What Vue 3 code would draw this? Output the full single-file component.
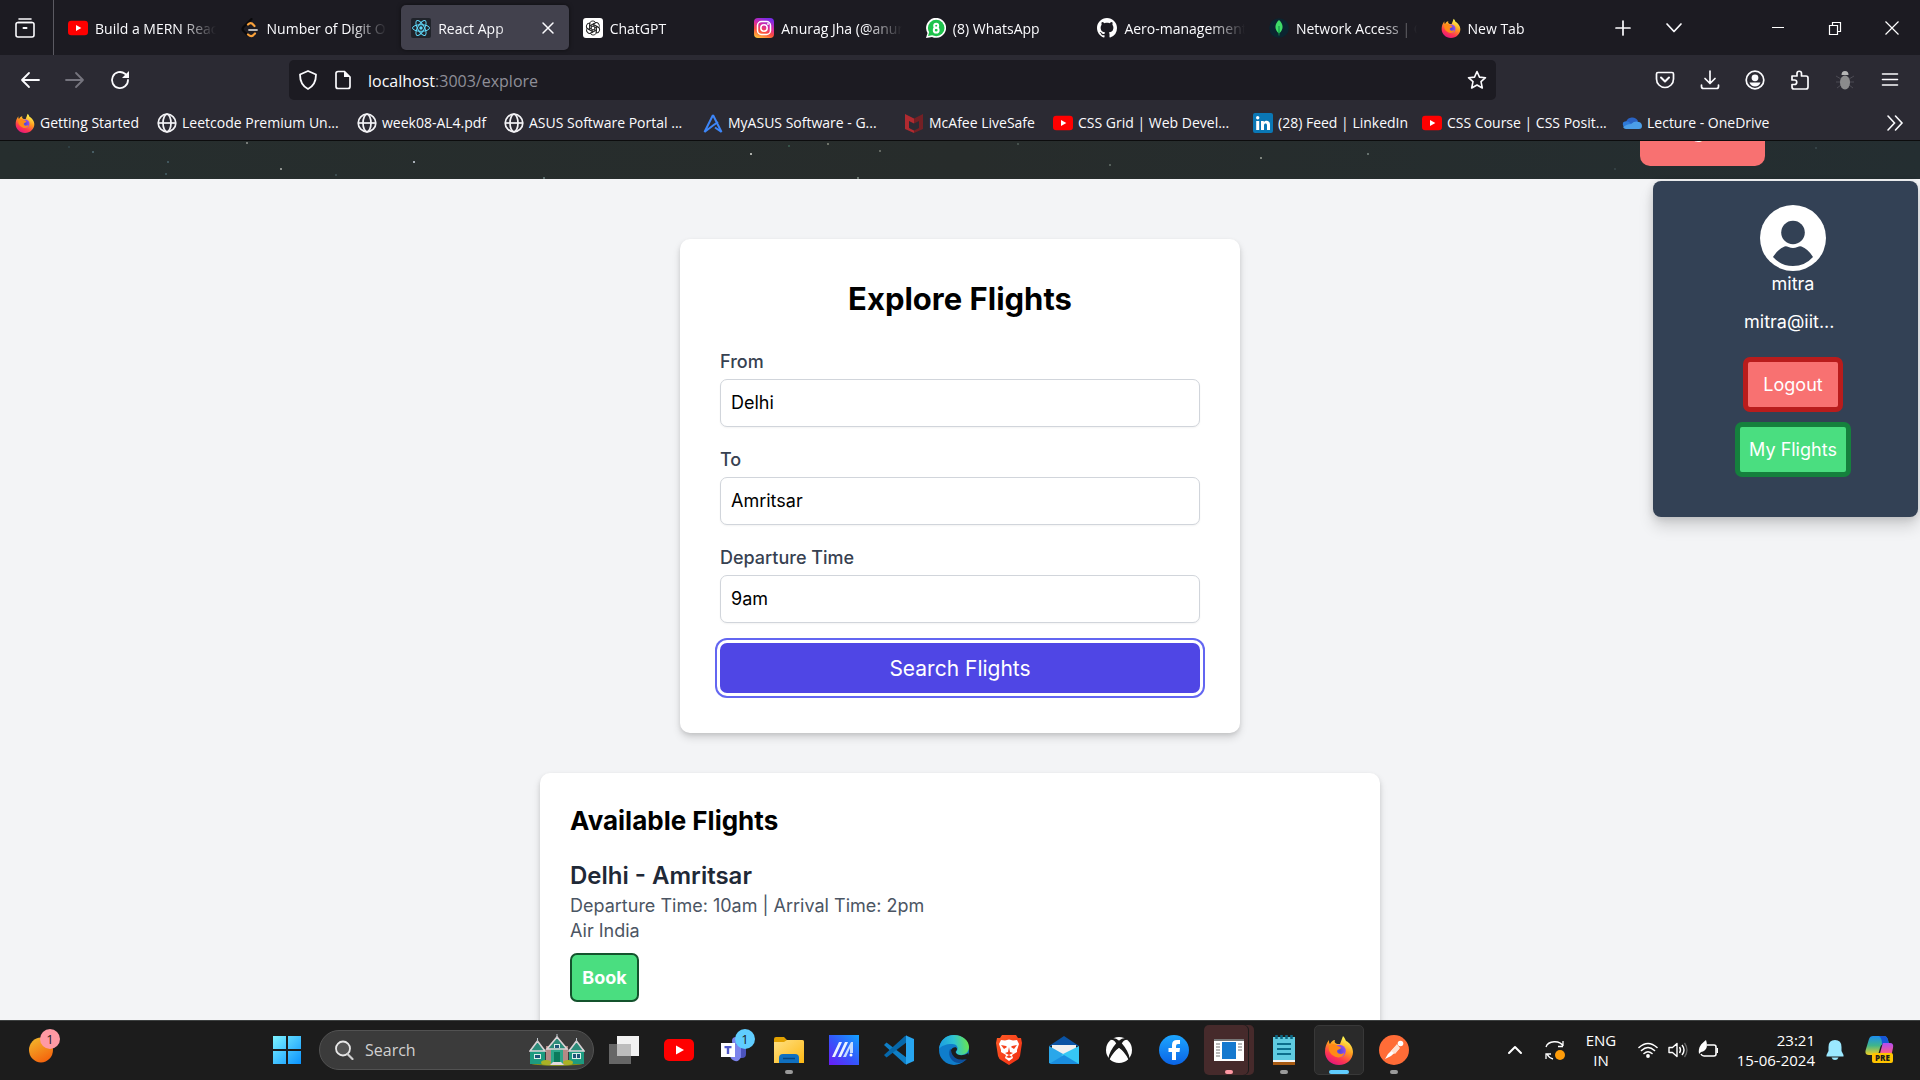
<script setup>
import { ref } from 'vue'

const from = ref('Delhi')
const to = ref('Amritsar')
const departure = ref('9am')
const address = ref('/explore')

const tabs = [
  { icon: 'youtube', label: 'Build a MERN React' },
  { icon: 'leetcode', label: 'Number of Digit One' },
  { icon: 'react', label: 'React App', active: true },
  { icon: 'chatgpt', label: 'ChatGPT' },
  { icon: 'instagram', label: 'Anurag Jha (@anurag' },
  { icon: 'whatsapp', label: '(8) WhatsApp' },
  { icon: 'github', label: 'Aero-management' },
  { icon: 'mongo', label: 'Network Access | Cloud' },
  { icon: 'firefox', label: 'New Tab' }
]

const bookmarks = [
  { icon: 'firefox', label: 'Getting Started' },
  { icon: 'globe', label: 'Leetcode Premium Un...' },
  { icon: 'globe', label: 'week08-AL4.pdf' },
  { icon: 'globe', label: 'ASUS Software Portal ...' },
  { icon: 'asus', label: 'MyASUS Software - G...' },
  { icon: 'mcafee', label: 'McAfee LiveSafe' },
  { icon: 'youtube', label: 'CSS Grid | Web Devel...' },
  { icon: 'linkedin', label: '(28) Feed | LinkedIn' },
  { icon: 'youtube', label: 'CSS Course | CSS Posit...' },
  { icon: 'onedrive', label: 'Lecture - OneDrive' }
]

const tools = ['pocket', 'download', 'account', 'puzzle', 'bug', 'menu']

const apps = [
  { icon: 'taskview', name: 'Task view' },
  { icon: 'youtube', name: 'YouTube' },
  { icon: 'teams', name: 'Teams', badge: 1 },
  { icon: 'folder', name: 'File Explorer', state: 'open' },
  { icon: 'myasus', name: 'MyASUS' },
  { icon: 'vscode', name: 'VS Code' },
  { icon: 'edge', name: 'Edge' },
  { icon: 'brave', name: 'Brave' },
  { icon: 'mail', name: 'Mail' },
  { icon: 'xbox', name: 'Xbox' },
  { icon: 'facebook', name: 'Facebook' },
  { icon: 'window', name: 'Window', state: 'alert' },
  { icon: 'notepad', name: 'Notepad', state: 'open' },
  { icon: 'firefox', name: 'Firefox', state: 'focused' },
  { icon: 'postman', name: 'Postman', state: 'open' }
]

const stars = [
  [92, 10, '#55717c'], [167, 20, '#4d6872'], [246, 1, '#9a9d98'], [280, 27, '#b9bcb6'], [413, 20, '#dfe6f2'],
  [165, 32, '#47626a'], [543, 36, '#6f8583'], [335, 33, '#44575b'], [68, 5, '#34494e'], [827, 2, '#8e9285'],
  [879, 9, '#7c8178'], [750, 12, '#e6e8e2'], [857, 36, '#8c9a90'], [788, 4, '#3f6457'], [1260, 16, '#a4aaa0'],
  [1109, 23, '#6a7670'], [1017, 2, '#52605a'], [1367, 12, '#808d88'], [1815, 6, '#3c4b50'], [1614, 27, '#3a474b']
]
</script>

<template>
  <div class="screen">
    <svg class="sprite" width="0" height="0" aria-hidden="true">
      <defs>
        <linearGradient id="g-ff" x1="0.8" y1="0" x2="0.3" y2="1">
          <stop offset="0.1" stop-color="#fff44f" /><stop offset="0.45" stop-color="#ff9a1f" /><stop offset="0.75" stop-color="#ff3750" /><stop offset="1" stop-color="#e3157f" />
        </linearGradient>
        <radialGradient id="g-ffc"><stop offset="0" stop-color="#4a4bd8" /><stop offset="1" stop-color="#9a4df0" /></radialGradient>
        <linearGradient id="g-ig" x1="0.2" y1="1" x2="0.6" y2="0">
          <stop offset="0" stop-color="#ffc13b" /><stop offset="0.35" stop-color="#fb4c3e" /><stop offset="0.65" stop-color="#d62aa6" /><stop offset="1" stop-color="#7a2be8" />
        </linearGradient>
        <linearGradient id="g-win" x1="0" y1="0" x2="1" y2="1"><stop offset="0" stop-color="#7df3ff" /><stop offset="1" stop-color="#0a93ff" /></linearGradient>
        <linearGradient id="g-orange" x1="0.2" y1="0" x2="0.7" y2="1"><stop offset="0" stop-color="#f2b62b" /><stop offset="1" stop-color="#f5610c" /></linearGradient>
        <linearGradient id="g-asus" x1="0" y1="1" x2="1" y2="0"><stop offset="0" stop-color="#6a1cf5" /><stop offset="0.5" stop-color="#3357fb" /><stop offset="1" stop-color="#12a2ff" /></linearGradient>
        <linearGradient id="g-folder" x1="0" y1="0" x2="1" y2="1"><stop offset="0" stop-color="#ffe083" /><stop offset="1" stop-color="#fdb813" /></linearGradient>
        <linearGradient id="g-edge" x1="0" y1="0.4" x2="1" y2="0.3"><stop offset="0" stop-color="#1b9de2" /><stop offset="0.5" stop-color="#2fc3d2" /><stop offset="1" stop-color="#6be64a" /></linearGradient>
        <linearGradient id="g-brave" x1="0" y1="0" x2="1" y2="1"><stop offset="0" stop-color="#ff5a25" /><stop offset="1" stop-color="#f02d13" /></linearGradient>
        <linearGradient id="g-fb" x1="0" y1="0" x2="0" y2="1"><stop offset="0" stop-color="#1da6ff" /><stop offset="1" stop-color="#0a63e6" /></linearGradient>
        <linearGradient id="g-cpl" x1="0" y1="0" x2="0" y2="1"><stop offset="0" stop-color="#1c8ef0" /><stop offset="0.5" stop-color="#3fb58b" /><stop offset="1" stop-color="#f2d021" /></linearGradient>
        <linearGradient id="g-cpr" x1="0" y1="0" x2="0" y2="1"><stop offset="0" stop-color="#b04df5" /><stop offset="0.6" stop-color="#f0589a" /><stop offset="1" stop-color="#ff9a58" /></linearGradient>
      </defs>

      <symbol id="youtube" viewBox="0 0 30 30"><rect y="4" width="30" height="22" rx="5" fill="#f00" /><path d="M12 10.500v9l8-4.500z" fill="#fff" /></symbol>
      <symbol id="leetcode" viewBox="0 0 20 20"><g fill="none" stroke-width="2.200" stroke-linecap="round"><path d="M11.500 1 3.500 9q-2 2 0 4l4 4" stroke="#0a0a0c" /><path d="M8 6.500q2-2 4-1l2.500 2.500M8 16.500q3 2.500 5 1l2-2" stroke="#f9a13a" /><path d="M9 12h8" stroke="#b7b7b7" stroke-width="1.800" /></g></symbol>
      <symbol id="react" viewBox="0 0 20 20"><rect width="20" height="20" rx="2" fill="#20232a" /><g fill="none" stroke="#61dafb"><ellipse cx="10" cy="10" rx="8.500" ry="3.300" /><ellipse cx="10" cy="10" rx="8.500" ry="3.300" transform="rotate(60 10 10)" /><ellipse cx="10" cy="10" rx="8.500" ry="3.300" transform="rotate(120 10 10)" /></g><circle cx="10" cy="10" r="1.700" fill="#61dafb" /></symbol>
      <symbol id="chatgpt" viewBox="0 0 20 20"><rect width="20" height="20" rx="3" fill="#fff" /><g fill="none" stroke="#222" stroke-width="0.900"><g id="petal"><path d="M6.500 11.800V6.300c0-3.600 4.600-4.400 6.200-1.700M8.300 11.200V7.400l4.500-2.600" /></g><use href="#petal" transform="rotate(60 10 10)" /><use href="#petal" transform="rotate(120 10 10)" /><use href="#petal" transform="rotate(180 10 10)" /><use href="#petal" transform="rotate(240 10 10)" /><use href="#petal" transform="rotate(300 10 10)" /></g></symbol>
      <symbol id="instagram" viewBox="0 0 20 20"><rect width="20" height="20" rx="4" fill="url(#g-ig)" /><g fill="none" stroke="#fff" stroke-width="1.500"><rect x="3.500" y="3.500" width="13" height="13" rx="4" /><circle cx="10" cy="10" r="3.200" /></g><circle cx="14" cy="6" r="0.900" fill="#fff" /></symbol>
      <symbol id="whatsapp" viewBox="0 0 20 20"><path d="M0 20 1.500 15A10 10 0 1 1 6 19z" fill="#fff" /><circle cx="10.200" cy="10" r="8.300" fill="#1fc24c" /><path d="M2 18l1.500-5 4 4z" fill="#1fc24c" /><g fill="none" stroke="#fff" stroke-width="2"><circle cx="10.200" cy="7.800" r="2" /><circle cx="10.200" cy="12.200" r="2.400" /></g></symbol>
      <symbol id="github" viewBox="0 0 16 16"><path fill="#fff" d="M8 0C3.580 0 0 3.580 0 8c0 3.540 2.290 6.530 5.470 7.590.4.070.55-.17.55-.38 0-.19-.01-.82-.01-1.490-2.010.37-2.530-.49-2.690-.94-.09-.23-.48-.94-.82-1.130-.28-.15-.68-.52-.01-.53.63-.01 1.080.58 1.230.82.72 1.210 1.870.87 2.330.66.07-.52.28-.87.51-1.070-1.780-.2-3.640-.89-3.640-3.950 0-.87.31-1.590.82-2.150-.08-.2-.36-1.020.08-2.120 0 0 .67-.21 2.200.82.64-.18 1.320-.27 2-.27s1.360.09 2 .27c1.530-1.040 2.200-.82 2.200-.82.44 1.100.16 1.920.08 2.120.51.56.82 1.270.82 2.150 0 3.070-1.870 3.750-3.650 3.950.29.25.54.73.54 1.480 0 1.070-.01 1.930-.01 2.200 0 .21.15.46.55.38A8 8 0 0 0 16 8c0-4.420-3.580-8-8-8z" /></symbol>
      <symbol id="mongo" viewBox="0 0 20 20"><circle cx="10" cy="10" r="9.800" fill="#0b2530" /><path d="M10 2c4.500 4 5 9.500 0 13.500C5 11.500 5.500 6 10 2z" fill="#3fdc68" /><path d="M10 8v9.500" stroke="#0b8a45" /></symbol>
      <symbol id="firefox" viewBox="0 0 30 30"><path d="M19 1c2 2 2.500 4 3 5 3 1 7 6 7 11 0 7-6 13-14 13S1 24 1 17c0-5 1-8 4-12 0 2 0 3 1 4 1-2 3-4 5-4-1 2 0 3 2 4h3c1-3 2-5 3-8z" fill="url(#g-ff)" /><circle cx="15.500" cy="16" r="6.300" fill="url(#g-ffc)" /><path d="M5 11c3-3 7-2 8 0 2 0 4 1 4 2s-3 1-4 3c0 3 4 4 7 2 0 4-6 6-10 3-4-2-6-6-5-10z" fill="#ff8a16" /></symbol>
      <symbol id="globe" viewBox="0 0 20 20"><g fill="none" stroke="#f3f3f6" stroke-width="1.700"><circle cx="10" cy="10" r="8.800" /><ellipse cx="10" cy="10" rx="4" ry="8.800" /><path d="M1 10h18" /></g></symbol>
      <symbol id="asus" viewBox="0 0 20 20"><path d="M10 2 18.500 19 12 14.500M10 2 1.500 19 10 12.500 15 9" fill="none" stroke="#3d86f8" stroke-width="2" /></symbol>
      <symbol id="mcafee" viewBox="0 0 20 20"><path d="M1 1 10 5.500v5L5 8v7l5 2.500V20l-9-4z" fill="#b02a30" /><path d="M19 1 10 5.500v5L15 8v7l-5 2.500V20l9-4z" fill="#742025" /></symbol>
      <symbol id="linkedin" viewBox="0 0 20 20"><rect width="20" height="20" rx="2" fill="#0a77b5" /><circle cx="4.700" cy="4.800" r="1.700" fill="#fff" /><path d="M3.200 8h3v9h-3zM8 8h2.800v1.300c2-2.600 6.200-1.700 6.200 2.200V17h-3v-4.800c0-2.500-3-2.300-3 0V17H8z" fill="#fff" /></symbol>
      <symbol id="onedrive" viewBox="0 0 20 20"><path d="M4 9a6.500 6.500 0 0 1 12-1l-3 6z" fill="#2a63c4" /><path d="M1 9.500q4-3 8 1l-3 5H4q-4-2-3-6z" fill="#2f7ad8" /><path d="M9 11c3-3 6-3 8-2 4 1 4 7 0 7H4q-2 0-3-2c3-2 5-3 8-3z" fill="#4b9ee8" /></symbol>

      <symbol id="library" viewBox="0 0 20 20"><g fill="none" stroke="#fbfbfe" stroke-width="1.600" stroke-linecap="round"><path d="M4 1h12M3 4.500h14" /><rect x="1" y="4.500" width="18" height="14.500" rx="2" /><path d="M8.500 10h3" stroke-width="2" /></g></symbol>
      <symbol id="back" viewBox="0 0 20 20"><path d="M19 10H2M9 3l-7 7 7 7" fill="none" stroke="#fbfbfe" stroke-width="1.800" stroke-linecap="round" stroke-linejoin="round" /></symbol>
      <symbol id="forward" viewBox="0 0 20 20"><path d="M1 10h17M11 3l7 7-7 7" fill="none" stroke="#75747e" stroke-width="1.800" stroke-linecap="round" stroke-linejoin="round" /></symbol>
      <symbol id="reload" viewBox="0 0 20 20"><path d="M18 10a8 8 0 1 1-3-6.200l3 2.800" fill="none" stroke="#fbfbfe" stroke-width="1.800" stroke-linecap="round" /><path d="M19 1v7h-7z" fill="#fbfbfe" /></symbol>
      <symbol id="shield" viewBox="0 0 20 20"><path d="M10 1l8 3.500c0 7-2 11.500-8 14.500C4 16 2 11.500 2 4.500z" fill="none" stroke="#fbfbfe" stroke-width="1.800" stroke-linejoin="round" /></symbol>
      <symbol id="page" viewBox="0 0 20 20"><path d="M5 1.500h6.500L17 7v9.500a2 2 0 0 1-2 2H5a2 2 0 0 1-2-2v-13a2 2 0 0 1 2-2z" fill="none" stroke="#fbfbfe" stroke-width="1.700" /><path d="M11 1.500V7h6z" fill="#fbfbfe" /></symbol>
      <symbol id="star" viewBox="0 0 20 20"><path d="M10 1.500l2.500 5.600 6 .6-4.500 4 1.300 6.300L10 15l-5.300 3L6 11.700l-4.500-4 6-.6z" fill="none" stroke="#fbfbfe" stroke-width="1.600" stroke-linejoin="round" /></symbol>
      <symbol id="pocket" viewBox="0 0 20 20"><g fill="none" stroke="#fbfbfe" stroke-width="1.700" stroke-linecap="round" stroke-linejoin="round"><path d="M3 2.500h14q1.500 0 1.500 1.500v5a8.500 8.500 0 0 1-17 0V4q0-1.500 1.500-1.500z" /><path d="M6 7.500l4 4 4-4" stroke-width="2" /></g></symbol>
      <symbol id="download" viewBox="0 0 20 20"><path d="M10 1v12M5 8.500l5 5 5-5M1.500 15v1.500q0 2 2 2h13q2 0 2-2V15" fill="none" stroke="#fbfbfe" stroke-width="1.700" stroke-linecap="round" stroke-linejoin="round" /></symbol>
      <symbol id="account" viewBox="0 0 20 20"><circle cx="10" cy="10" r="8.800" fill="none" stroke="#fbfbfe" stroke-width="1.700" /><circle cx="10" cy="7.800" r="3.400" fill="#fbfbfe" /><path d="M4.500 12.500h11q-1.500 4-5.500 4t-5.500-4z" fill="#fbfbfe" /></symbol>
      <symbol id="puzzle" viewBox="0 0 20 20"><path d="M2 6h5V3.500a2 2 0 0 1 4.500 0V6H16q2 0 2 2v9q0 2-2 2H4q-2 0-2-2v-2.500h2.500a2 2 0 0 0 0-4.500H2z" fill="none" stroke="#fbfbfe" stroke-width="1.700" stroke-linejoin="round" /></symbol>
      <symbol id="bug" viewBox="0 0 20 20"><path d="M1 6l5 3M19 6l-5 3M1 12h5M19 12h-5M2 18l4-3M18 18l-4-3" stroke="#4c4b54" /><ellipse cx="10" cy="12.500" rx="5" ry="7" fill="#8b8b8c" /><path d="M6.500 5a3.500 4 0 0 1 7 0z" fill="#b5b5b5" /></symbol>
      <symbol id="menu" viewBox="0 0 20 20"><path d="M2.500 4h15M2.500 9.500h15M2.500 15h15" stroke="#fbfbfe" stroke-width="1.600" stroke-linecap="round" /></symbol>
      <symbol id="close" viewBox="0 0 20 20"><path d="M4 5l10 10M14 5l-10 10" stroke="#fbfbfe" stroke-width="1.500" stroke-linecap="round" /></symbol>
      <symbol id="plus" viewBox="0 0 20 20"><path d="M10 3v14M3 10h14" stroke="#fbfbfe" stroke-width="1.700" stroke-linecap="round" /></symbol>
      <symbol id="down" viewBox="0 0 20 20"><path d="M3 6l7 7.500L17 6" fill="none" stroke="#fbfbfe" stroke-width="1.700" stroke-linecap="round" stroke-linejoin="round" /></symbol>
      <symbol id="minimise" viewBox="0 0 20 20"><path d="M4 9.500h12" stroke="#fff" /></symbol>
      <symbol id="restore" viewBox="0 0 20 20"><path d="M4.500 7.500h8v9h-8zM7.500 7V4.500h8v9H13" fill="none" stroke="#fff" stroke-width="1.200" /></symbol>
      <symbol id="shut" viewBox="0 0 20 20"><path d="M3.500 3.500l13 13M16.500 3.500l-13 13" stroke="#fff" stroke-width="1.200" /></symbol>
      <symbol id="more" viewBox="0 0 20 20"><path d="M3 3l6.500 7L3 17M10.500 3l6.500 7-6.500 7" fill="none" stroke="#fbfbfe" stroke-width="1.600" stroke-linecap="round" /></symbol>

      <symbol id="avatar" viewBox="0 0 66 66"><circle cx="33" cy="33" r="33" fill="#fff" /><circle cx="33" cy="27.500" r="11.800" fill="#334155" /><path d="M13 52q5-8 11.500-10.500 2-.5 4 .5 4.500 2 9 0 2-1 4-.5Q48 44 53 52q-8 9-20 9t-20-9z" fill="#334155" /></symbol>

      <symbol id="weather" viewBox="0 0 24 26"><ellipse cx="12" cy="13" rx="12" ry="12.500" fill="url(#g-orange)" /></symbol>
      <symbol id="windows" viewBox="0 0 30 30"><path d="M1 1h13v13H1zM16 1h13v13H16zM1 16h13v13H1zM16 16h13v13H16z" fill="url(#g-win)" /></symbol>
      <symbol id="search" viewBox="0 0 20 20"><circle cx="9" cy="8.500" r="7" fill="#555" stroke="#e8e8e8" stroke-width="1.800" /><path d="M13.500 14l5 5" stroke="#d0d0d0" stroke-width="2.200" stroke-linecap="round" /></symbol>
      <symbol id="houses" viewBox="0 0 56 32">
        <ellipse cx="28" cy="29" rx="27" ry="3" fill="#7d8b1e" />
        <path d="M1 15h15v15H1zM40 15h15v15H40z" fill="#1d9b80" /><path d="M17 12h22v19H17z" fill="#b48a86" /><path d="M22 9h12v22H22z" fill="#2fa88b" />
        <path d="M8.500 7 1 17h15zM47.500 7 40 17h15zM28 3 18 15h20z" fill="#2c8c7a" stroke="#dcd3d6" stroke-width="1.600" />
        <path d="M8.500 4v4M47.500 4v4M28 0v4" stroke="#bfc6cc" /><path d="M5 20h7v5H5zM43 19h9v6h-9zM25 10h6v4h-6z" fill="#d8efe8" /><path d="M6 21h5v3H6zM44 20h3v4h-3zM48 20h3v4h-3zM26 11h4v3h-4z" fill="#1d5578" /><path d="M25 18h6v12h-6z" fill="#0c7a5c" /><path d="M21 31l3-3h8l3 3z" fill="#e4d9dc" /><ellipse cx="17" cy="28.500" rx="5" ry="2.500" fill="#a9b225" /><ellipse cx="39" cy="28.500" rx="5" ry="2.500" fill="#a9b225" />
      </symbol>
      <symbol id="taskview" viewBox="0 0 30 30"><rect x="8" y="1" width="22" height="20" fill="#f2f2f2" /><rect x="0" y="9" width="22" height="20" fill="#666" /><path d="M8 9h14v12H8z" fill="#bdbdbd" /></symbol>
      <symbol id="teams" viewBox="0 0 30 30"><path d="M19 11h8v8q0 4-4 4h-4z" fill="#4b53bc" /><circle cx="17" cy="6" r="4" fill="#7b83eb" /><path d="M11 10h11v12q-2 5-6 4-4-1-5-5z" fill="#7b83eb" /><rect x="2" y="8" width="14" height="14" fill="#fff" /><path d="M5.500 11h7v2.200H10.200V19H7.800v-5.800H5.500z" fill="#5059c9" /></symbol>
      <symbol id="folder" viewBox="0 0 30 30"><path d="M0 4q0-2 2-2h8l3 3h15q2 0 2 2v4H0z" fill="#e2a100" /><path d="M0 7h10l3-2h15q2 0 2 2v21H0z" fill="url(#g-folder)" /><path d="M5 28v-5q0-4 4-4h12q4 0 4 4v5z" fill="#1070c0" /><path d="M9 23.500h12" stroke="#07457f" stroke-width="1.500" /></symbol>
      <symbol id="myasus" viewBox="0 0 30 30"><rect width="30" height="30" fill="url(#g-asus)" /><path d="M3 22 10 7h3L6 22zM9 22l7-15h3l-7 15z" fill="#eaf2ff" /><path d="M14 22 22 7h2v11h-3v-5l-4 9z" fill="#c7dcff" /><circle cx="22" cy="20" r="1.500" fill="#fff" /></symbol>
      <symbol id="vscode" viewBox="0 0 30 30"><path d="M0 10l2.500-2.500L23 23v6.500L21 29z" fill="#0f7fc6" /><path d="M0 20l2.500 2.500L23 7V.500L21 1z" fill="#0668ab" /><path d="M22 .500 30 4v22l-8 3.500z" fill="#27a5f0" /></symbol>
      <symbol id="edge" viewBox="0 0 30 30"><circle cx="15" cy="15" r="15" fill="#0f7dcb" /><path d="M0 14C1 5 7 0 15 0c9 0 15 6 15 12 0 5-4 8-8 8-3 0-5-1-5-3 3-3 2-8-4-8C7 9 2 11 0 14z" fill="url(#g-edge)" /><path d="M11 14c-3 8 3 14 9 14 3 0 6-2 8-4-7 2-13-1-12-7z" fill="#0c4f9c" /><path d="M12 15c1-3 6-4 6-1 0 2-2 2-1 4 2 3 8 3 12 0l1 4-2 2c-7 2-15 0-16-9z" fill="#1c1c1c" /></symbol>
      <symbol id="brave" viewBox="0 0 30 30"><path d="M8 0h14l2 3 3 0 1 5-2 13q-1 3-3 4l-8 5-8-5q-2-1-3-4L2 8l1-5h3z" fill="url(#g-brave)" /><path d="M7 5l4 .500 4-1 4 1L23 5l2 4-2 6 0 2-5 3 1 3-4 3-4-3 1-3-5-3 0-2-2-6z" fill="#fff" /><path d="M7 10l5 1 1 1-3 2zM23 10l-5 1-1 1 3 2zM15 12l1 5 3 1-4 2-4-2 3-1zM12 22l3-2 3 2-3 1z" fill="#f5401b" /></symbol>
      <symbol id="mail" viewBox="0 0 30 30"><path d="M0 11 15 1l15 10z" fill="#0a53a4" /><path d="M3 10h24v10H3z" fill="#f0f0f0" /><path d="M0 11l30 17H0z" fill="#2aa7ea" /><path d="M30 11 12 20l14 9h4z" fill="#36c8f5" /><path d="M0 29h30L15 20z" fill="#1a8ee0" /></symbol>
      <symbol id="xbox" viewBox="0 0 30 30"><circle cx="15" cy="15" r="13" fill="#fff" /><path d="M7 4q4-1 8 2.500Q19 3 23 4q-4 0-6 4.500 7 8 8 15.500-4-8-10-12Q9 16 5 24q1-7.500 8-15.500Q11 4 7 4z" fill="#1c1c1c" stroke="#1c1c1c" stroke-width="1.500" /></symbol>
      <symbol id="facebook" viewBox="0 0 30 30"><circle cx="15" cy="15" r="15" fill="url(#g-fb)" /><path d="M13 25v-8H9.500v-4H13v-3q0-5 5-5h3v4h-2q-2 0-2 2v2h4l-.5 4H17v8z" fill="#fff" /></symbol>
      <symbol id="window" viewBox="0 0 30 30"><rect y="4" width="30" height="22" fill="#fff" /><path d="M0 4h30v2H0z" fill="#777" /><rect x="8" y="7" width="14" height="17" fill="#1579cf" /><path d="M2 9h4M2 12h4M2 15h4M2 18h4M2 21h4M24 9h4M24 12h4M24 15h4" stroke="#777" /></symbol>
      <symbol id="notepad" viewBox="0 0 30 30"><path d="M4 2h22v25H4z" fill="#5fcbe0" /><path d="M4 25h22v2H4z" fill="#f5f5f5" /><path d="M4 27h22v3H4z" fill="#a75a12" /><path d="M8 9h14M8 14h14M8 19h14" stroke="#0c6f8c" stroke-width="2" /><path d="M7.500 0v4M12.500 0v4M17.500 0v4M22.500 0v4" stroke="#0d6985" stroke-width="2.500" /></symbol>
      <symbol id="postman" viewBox="0 0 30 30"><circle cx="15" cy="15" r="15" fill="#ff6c37" /><path d="M6 24l3-5 8-8 3 3-8 7z" fill="#fff" /><circle cx="21.500" cy="8.500" r="2.800" fill="#fff" /><path d="M12 16l6-7 3 4-5 6z" fill="#ffe1d4" /></symbol>
      <symbol id="up" viewBox="0 0 20 20"><path d="M4 13l6-6 6 6" fill="none" stroke="#fff" stroke-width="2" stroke-linecap="round" stroke-linejoin="round" /></symbol>
      <symbol id="sync" viewBox="0 0 20 20"><path d="M1 7a9 7 0 0 1 17-1V1M18 6.500h-5M1 19v-5h5M2 14q2 4 6 5" fill="none" stroke="#fff" stroke-width="1.300" /><circle cx="15" cy="15" r="5" fill="#ff9d0a" /></symbol>
      <symbol id="wifi" viewBox="0 0 20 20"><g fill="none" stroke="#fff" stroke-width="1.600" stroke-linecap="round"><path d="M1 7.500q9-8 18 0M3.500 10.500q6.500-6 13 0M6 13.500q4-3.500 8 0" /></g><circle cx="10" cy="16" r="1.900" fill="#fff" /></symbol>
      <symbol id="volume" viewBox="0 0 20 20"><path d="M1 7.500h3.500L9 3.500v13l-4.500-4H1z" fill="none" stroke="#fff" stroke-width="1.400" stroke-linejoin="round" /><path d="M11.500 7q2 3 0 6M14 5q4 5 0 10" fill="none" stroke="#fff" stroke-width="1.400" /><path d="M16.500 3q5 7 0 14" fill="none" stroke="#666" stroke-width="1.300" /></symbol>
      <symbol id="battery" viewBox="0 0 20 20"><path d="M9 5h7q2 0 2 2v7q0 2-2 2H6q-2 0-3-2" fill="none" stroke="#fff" stroke-width="1.600" /><path d="M18.500 8h1.500v5h-1.500z" fill="#fff" /><path d="M1 14C0 7 3 4 8 0c2 6 1 11-5 12z" fill="#fff" /></symbol>
      <symbol id="bell" viewBox="0 0 20 20"><path d="M10 0q6.500 0 6.500 7v4l2 4v1.500h-17V15l2-4V7Q3.500 0 10 0z" fill="#9be8ff" /><path d="M6.500 17.500h7q-1 2.500-3.500 2.500t-3.500-2.500z" fill="#9be8ff" /></symbol>
      <symbol id="copilot" viewBox="0 0 30 30"><path d="M8 1h11q3 0 4 4l1 4h-5q-3 0-4 4l-2 7H4Q-1 20 1 14L4 4q1-3 4-3z" fill="url(#g-cpl)" /><path d="M14 1h5q3 0 4 4l1 4h-7q0-6-3-8z" fill="#1757d8" /><path d="M18 8h7q4 0 3 5l-2 9H14l3-11z" fill="url(#g-cpr)" /></symbol>
    </svg>

    <header class="browser">
      <div class="tabbar">
        <button class="library" aria-label="Library"><svg class="ico"><use href="#library" /></svg></button>
        <nav class="tabs">
          <a v-for="t in tabs" :key="t.label" href="#" class="tab" :class="{ active: t.active }">
            <svg class="ico"><use :href="'#' + t.icon" /></svg>
            <span class="tab-label">{{ t.label }}</span>
            <svg v-if="t.active" class="ico"><use href="#close" /></svg>
          </a>
        </nav>
        <div class="tab-tools">
          <button aria-label="New tab"><svg class="ico"><use href="#plus" /></svg></button>
          <button aria-label="List tabs"><svg class="ico"><use href="#down" /></svg></button>
        </div>
        <div class="win-tools">
          <button aria-label="Minimise"><svg class="ico"><use href="#minimise" /></svg></button>
          <button aria-label="Restore"><svg class="ico"><use href="#restore" /></svg></button>
          <button aria-label="Close"><svg class="ico"><use href="#shut" /></svg></button>
        </div>
      </div>

      <div class="toolbar">
        <div class="tools">
          <button aria-label="Back"><svg class="ico"><use href="#back" /></svg></button>
          <button aria-label="Forward"><svg class="ico"><use href="#forward" /></svg></button>
          <button aria-label="Reload"><svg class="ico"><use href="#reload" /></svg></button>
        </div>
        <div class="address">
          <svg class="ico"><use href="#shield" /></svg>
          <svg class="ico"><use href="#page" /></svg>
          <p class="url"><b>localhost</b>:3003{{ address }}</p>
          <button aria-label="Bookmark"><svg class="ico"><use href="#star" /></svg></button>
        </div>
        <div class="tools">
          <button v-for="t in tools" :key="t" :aria-label="t"><svg class="ico"><use :href="'#' + t" /></svg></button>
        </div>
      </div>

      <div class="bookmarks">
        <nav class="marks">
          <a v-for="(b, i) in bookmarks" :key="i" href="#" class="mark">
            <svg class="ico"><use :href="'#' + b.icon" /></svg>
            <span>{{ b.label }}</span>
          </a>
        </nav>
        <button aria-label="More bookmarks"><svg class="ico"><use href="#more" /></svg></button>
      </div>
    </header>

    <main class="page">
      <section class="hero">
        <svg class="stars" aria-hidden="true">
          <rect v-for="(s, i) in stars" :key="i" :x="s[0]" :y="s[1]" width="2" height="2" :fill="s[2]" />
        </svg>
        <button class="hero-button">Logout</button>
      </section>

      <form class="card explore" @submit.prevent>
        <h1>Explore Flights</h1>
        <div class="field">
          <label for="from">From</label>
          <input id="from" v-model="from" type="text">
        </div>
        <div class="field">
          <label for="to">To</label>
          <input id="to" v-model="to" type="text">
        </div>
        <div class="field">
          <label for="departure">Departure Time</label>
          <input id="departure" v-model="departure" type="text">
        </div>
        <button class="submit" type="submit">Search Flights</button>
      </form>

      <section class="card results">
        <h2>Available Flights</h2>
        <article>
          <h3>Delhi - Amritsar</h3>
          <p>Departure Time: 10am | Arrival Time: 2pm</p>
          <p>Air India</p>
          <button class="book">Book</button>
        </article>
      </section>

      <aside class="profile">
        <svg class="avatar"><use href="#avatar" /></svg>
        <p class="name">mitra</p>
        <p class="email">mitra@iit...</p>
        <button class="logout">Logout</button>
        <button class="mine">My Flights</button>
      </aside>
    </main>

    <footer class="taskbar">
      <button class="weather" aria-label="Widgets">
        <svg><use href="#weather" /></svg>
        <span class="badge pink">1</span>
      </button>
      <div class="dock">
        <button class="start" aria-label="Start"><svg class="app-ico"><use href="#windows" /></svg></button>
        <label class="search">
          <svg class="ico"><use href="#search" /></svg>
          <input type="text" placeholder="Search" aria-label="Search">
          <svg class="houses"><use href="#houses" /></svg>
        </label>
        <button v-for="a in apps" :key="a.name" class="app" :class="a.state" :aria-label="a.name">
          <svg class="app-ico"><use :href="'#' + a.icon" /></svg>
          <span v-if="a.badge" class="badge blue">{{ a.badge }}</span>
        </button>
      </div>
      <div class="tray">
        <svg class="ico"><use href="#up" /></svg>
        <svg class="ico"><use href="#sync" /></svg>
        <p class="lang">ENG<br>IN</p>
        <div class="status">
          <svg class="ico"><use href="#wifi" /></svg>
          <svg class="ico"><use href="#volume" /></svg>
          <svg class="ico"><use href="#battery" /></svg>
        </div>
        <p class="clock">23:21<br>15-06-2024</p>
        <svg class="ico"><use href="#bell" /></svg>
        <div class="copilot">
          <svg class="app-ico"><use href="#copilot" /></svg>
          <span>PRE</span>
        </div>
      </div>
    </footer>
  </div>
</template>

<style>
html, body { margin: 0; background: #f3f4f6; }
</style>

<style scoped>
* { box-sizing: border-box; }
h1, h2, h3, p { margin: 0; }
button { padding: 0; border: 0; background: none; color: inherit; font: inherit; cursor: pointer; }
a { color: inherit; text-decoration: none; }
.sprite { position: absolute; }
.screen { display: flex; flex-direction: column; height: 100vh; overflow: hidden; font-family: "Inter", "Noto Sans", sans-serif; }
.ico { display: block; flex: none; width: 20px; height: 20px; }
.app-ico { display: block; flex: none; width: 30px; height: 30px; }

.browser { flex: none; background: #2b2a33; color: #fbfbfe; border-bottom: 1px solid #0c0c0d; font-family: "Open Sans", "Noto Sans", sans-serif; font-size: 14px; }
.tabbar { display: flex; height: 55px; background: #1c1b22; }
.library { flex: none; width: 54px; padding-left: 15px; border-right: 1px solid #5b5a62; }
.tabs { display: flex; flex: 1; min-width: 0; padding: 5px 0 5px 2px; }
.tab { display: flex; flex: 1; align-items: center; gap: 7px; min-width: 0; margin: 0 2px; padding: 0 10px; border-radius: 5px; }
.tab.active { background: #42414d; box-shadow: 0 0 4px #0008; }
.tab-label { flex: 1; overflow: hidden; padding-top: 2px; white-space: nowrap; mask-image: linear-gradient(to left, transparent, #000 36px); }
.tab-tools { display: flex; align-items: center; gap: 31px; padding-left: 13px; }
.win-tools { display: flex; align-items: center; gap: 37px; padding: 0 18px 0 84px; }
.toolbar { display: flex; align-items: center; height: 50px; padding: 0 20px; }
.tools { display: flex; gap: 25px; }
.address { display: flex; flex: 1; align-items: center; gap: 15px; height: 40px; margin: 0 159px; padding: 0 9px; border-radius: 5px; background: #1c1b22; }
.url { flex: 1; padding-top: 2px; color: #8f8f98; font-size: 16px; }
.url b { color: #fbfbfe; font-weight: 400; }
.bookmarks { display: flex; align-items: center; justify-content: space-between; height: 35px; padding: 0 15px; }
.marks { display: grid; grid-template-columns: 142px 200px 147px 199px 201px 149px 200px 169px 200px 150px; }
.mark { display: flex; align-items: center; gap: 5px; white-space: nowrap; }

.page { position: relative; flex: 1; min-height: 0; overflow: hidden; background: #f3f4f6; }
.hero { position: relative; display: flex; align-items: flex-end; justify-content: flex-end; height: 38px; padding: 0 155px 13px 0; overflow: hidden; background: linear-gradient(90deg, #262e2e, #272c2b 50%, #242e31); }
.stars { position: absolute; inset: 0; width: 100%; height: 100%; opacity: 0.7; }
.hero-button { position: relative; flex: none; width: 125px; height: 70px; border-radius: 10px; background: #f87171; color: #fff; font-size: 20px; font-weight: 600; line-height: 20px; }
.card { margin: 0 auto; border-radius: 10px; background: #fff; box-shadow: 0 5px 8px #0000001f, 0 2px 4px #0000001a; }
.explore { width: 560px; max-width: 100%; margin-top: 60px; padding: 40px; }
h1 { margin-bottom: 30px; font-size: 31px; line-height: 40px; font-weight: 700; text-align: center; }
.field { margin-bottom: 20px; }
.field label { display: block; margin-bottom: 5px; color: #374151; font-size: 18px; line-height: 25px; font-weight: 500; }
.field input { display: block; width: 100%; height: 48px; padding: 0 10px 2px; border: 1px solid #d1d5db; border-radius: 7px; box-shadow: 0 1px 2px #0000000d; background: #fff; color: #000; font: 18px "Inter", sans-serif; }
.submit { display: block; width: 100%; height: 50px; border-radius: 7px; background: #4f46e5; box-shadow: 0 0 0 3px #fff, 0 0 0 5px #6366f1; color: #fff; font-size: 21px; }
.results { width: 840px; max-width: 100%; height: 100%; margin-top: 40px; padding: 30px; }
h2 { margin-bottom: 20px; font-size: 26px; line-height: 35px; font-weight: 700; }
h3 { color: #1f2937; font-size: 24px; line-height: 35px; font-weight: 600; }
article p { color: #4b5563; font-size: 18px; line-height: 25px; }
.book { width: 69px; height: 49px; margin-top: 10px; border: 2px solid #14532d; border-radius: 7px; background: #4ade80; color: #fff; font-size: 18px; font-weight: 700; }
.profile { position: absolute; top: 40px; right: 2px; display: flex; flex-direction: column; align-items: center; width: 265px; height: 336px; padding: 24px 0 0 15px; border-radius: 8px; background: #334155; box-shadow: 0 10px 15px #0002, 0 2px 8px #0002; color: #fff; font-size: 18px; }
.avatar { width: 66px; height: 66px; }
.name { margin-bottom: 13px; line-height: 25px; }
.email { width: 100px; margin-bottom: 23px; padding-left: 1px; line-height: 25px; white-space: nowrap; }
.logout, .mine { height: 55px; border: 5px solid; border-radius: 7px; }
.logout { width: 100px; margin-bottom: 10px; border-color: #b91c1c; background: #f87171; }
.mine { width: 116px; border-color: #15803d; background: #4ade80; }

.taskbar { display: flex; flex: none; height: 60px; padding-bottom: 1px; border-top: 1px solid #3d4040; background: #1c1c1c; color: #fff; font-family: "Open Sans", "Noto Sans", sans-serif; }
.weather { position: relative; width: 24px; height: 26px; margin: 16px 0 0 29px; }
.weather svg { display: block; width: 24px; height: 26px; }
.badge { position: absolute; width: 20px; height: 20px; border-radius: 50%; color: #1c1c1c; font-size: 13px; line-height: 20px; text-align: center; }
.pink { top: -8px; left: 11px; background: #ff99a4; }
.blue { top: 4px; left: 26px; background: #60cdff; }
.dock { display: flex; flex: 1; align-items: center; padding-left: 219px; }
.start { margin-right: 17px; }
.search { display: flex; align-items: center; gap: 11px; width: 275px; height: 40px; margin-right: 5px; padding: 0 8px 0 14px; border: 1px solid #525252; border-radius: 20px; background: #3b3b3b; }
.search input { flex: 1; min-width: 0; padding: 0; border: 0; background: none; color: #fff; font: 16px "Open Sans", sans-serif; }
.search input::placeholder { color: #d0d0d0; opacity: 1; }
.houses { width: 56px; height: 32px; }
.app { position: relative; display: flex; flex: none; align-items: center; justify-content: center; width: 50px; height: 50px; margin-right: 5px; border-radius: 5px; }
.open::after, .alert::after, .focused::after { content: ""; position: absolute; bottom: 1px; left: 21px; width: 8px; height: 4px; border-radius: 2px; background: #9a9a9a; }
.alert { background: #462a2b; box-shadow: inset -5px 0 #462a2b, inset -6px 0 #1c1c1c; }
.alert::after { background: #ff99a4; }
.focused { border: 1px solid #383838; background: #2a2a2a; }
.focused::after { bottom: 0; left: 14px; width: 20px; background: #60cdff; }
.tray { display: flex; align-items: center; padding-right: 25px; }
.tray > .ico:nth-child(2) { margin-left: 20px; }
.lang { width: 40px; margin-left: 16px; font-size: 15px; line-height: 20px; text-align: center; }
.status { display: flex; gap: 10px; margin-left: 17px; }
.clock { width: 97px; margin: 0 10px 0 0; font-size: 15px; line-height: 20px; text-align: right; white-space: nowrap; }
.copilot { position: relative; margin-left: 20px; }
.copilot span { position: absolute; top: 18px; left: 7px; padding: 0 3px; border-radius: 2px; background: #ffc400; color: #1c1c1c; font-size: 8px; line-height: 10px; font-weight: 800; }
</style>
